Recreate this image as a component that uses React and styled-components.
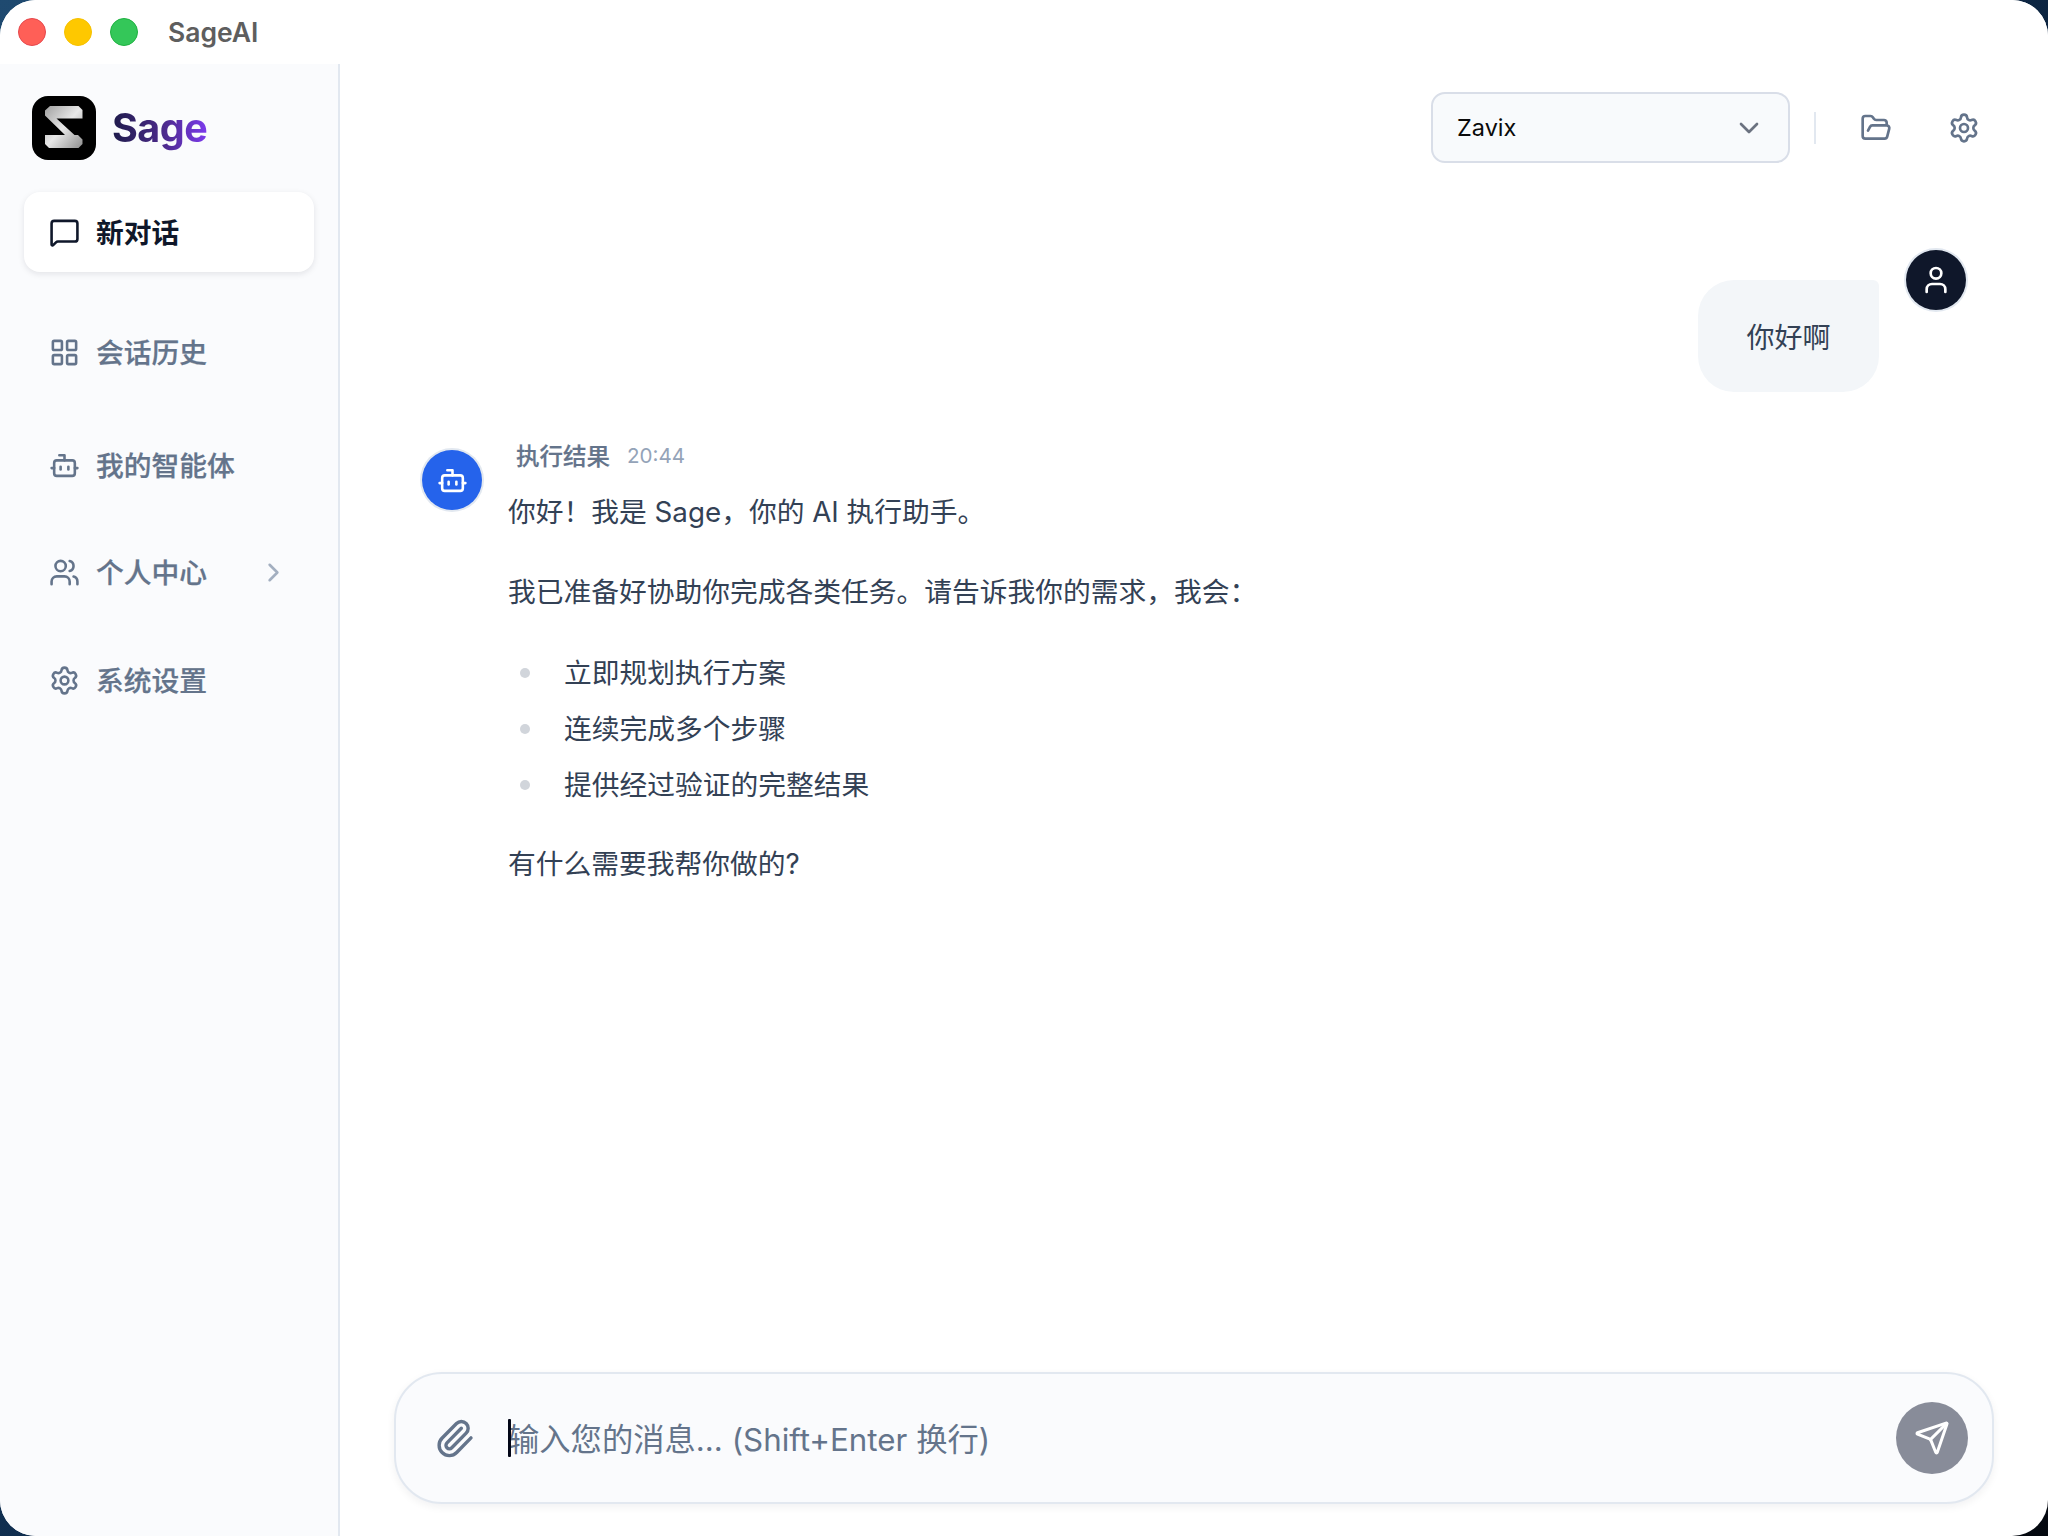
import React from 'react'
import styled, { createGlobalStyle } from 'styled-components'
import {
  MessageSquare,
  LayoutGrid,
  Bot,
  Users,
  ChevronRight,
  ChevronDown,
  Settings,
  FolderOpen,
  User,
  Paperclip,
  Send,
} from 'lucide-react'

const GlobalStyle = createGlobalStyle`
  html, body {
    margin: 0;
    padding: 0;
    height: 100%;
    background: linear-gradient(135deg, #1f4a70 0%, #0e2a4a 50%, #04080f 100%);
  }
  * {
    box-sizing: border-box;
  }
  #root {
    height: 1536px;
  }
`

const Window = styled.div`
  width: 2048px;
  height: 1536px;
  background: #fff;
  border-radius: 36px;
  overflow: hidden;
  display: flex;
  flex-direction: column;
  font-family: Inter, "Noto Sans CJK SC", "Noto Sans", sans-serif;
  color: #334155;
`

const TitleBar = styled.div`
  height: 64px;
  flex-shrink: 0;
  display: flex;
  align-items: center;
  padding-left: 18px;
  background: #fff;
`

const TrafficLight = styled.span`
  width: 28px;
  height: 28px;
  border-radius: 50%;
  margin-right: 18px;
  background: ${(p) => p.$color};
  border: 1px solid ${(p) => p.$edge};
`

const AppTitle = styled.div`
  margin-left: 12px;
  font-size: 26.5px;
  font-weight: 600;
  color: #5e5e5e;
`

const Body = styled.div`
  flex: 1;
  display: flex;
  min-height: 0;
`

const Sidebar = styled.aside`
  width: 340px;
  flex-shrink: 0;
  background: #fafbfd;
  border-right: 2px solid #e2e8f0;
  padding: 32px 24px 0;
`

const Brand = styled.div`
  display: flex;
  align-items: center;
  gap: 16px;
  padding-left: 8px;
  height: 64px;
  margin-bottom: 32px;
`

const LogoBox = styled.svg`
  width: 64px;
  height: 64px;
  display: block;
`

const BrandName = styled.span`
  font-size: 39.5px;
  font-weight: 700;
  letter-spacing: -0.5px;
  background: linear-gradient(90deg, #1e1b4b 0%, #4c2a8c 55%, #7c3aed 100%);
  -webkit-background-clip: text;
  background-clip: text;
  color: transparent;
`

const NavItem = styled.div`
  width: 290px;
  height: 80px;
  margin-top: ${(p) => p.$top || 0}px;
  padding: 0 25px;
  display: flex;
  align-items: center;
  gap: 16px;
  border-radius: 16px;
  font-size: 27.75px;
  font-weight: ${(p) => (p.$active ? 700 : 500)};
  -webkit-text-stroke: ${(p) => (p.$active ? 0 : '0.25px')};
  color: ${(p) => (p.$active ? '#0f172a' : '#64748b')};
  background: ${(p) => (p.$active ? '#fff' : 'transparent')};
  box-shadow: ${(p) => (p.$active ? '0 2px 6px rgba(15, 23, 42, 0.1)' : 'none')};
`

const NavLabel = styled.span`
  flex: 1;
  margin-bottom: 3px;
`

const Main = styled.main`
  flex: 1;
  min-width: 0;
  display: flex;
  flex-direction: column;
`

const Header = styled.header`
  display: flex;
  align-items: center;
  height: 71px;
  margin-top: 28px;
  padding-right: 68px;
  justify-content: flex-end;
`

const AgentSelect = styled.div`
  width: 359px;
  height: 71px;
  padding: 0 23px 0 24px;
  display: flex;
  align-items: center;
  justify-content: space-between;
  background: #f8fafc;
  border: 2px solid #d9dee8;
  border-radius: 14px;
  font-size: 23.5px;
  color: #0a0a0a;
`

const Divider = styled.div`
  width: 2px;
  height: 32px;
  background: #e2e8f0;
  margin: 0 44px 0 24px;
`

const HeaderIcons = styled.div`
  display: flex;
  align-items: center;
  gap: 56px;
  color: #64748b;
`

const Messages = styled.div`
  flex: 1;
  min-height: 0;
  padding: 0 0 0 82px;
`

const UserRow = styled.div`
  display: flex;
  justify-content: flex-end;
  padding-right: 82px;
  margin-top: 87px;
`

const UserBubble = styled.div`
  width: 181px;
  height: 112px;
  margin-top: 30px;
  display: flex;
  align-items: center;
  justify-content: center;
  background: #f3f6f9;
  border-radius: 36px 6px 36px 36px;
  font-size: 28px;
`

const Avatar = styled.div`
  width: 60px;
  height: 60px;
  border-radius: 50%;
  flex-shrink: 0;
  display: flex;
  align-items: center;
  justify-content: center;
  color: #fff;
  background: ${(p) => p.$bg};
  box-shadow: 0 0 0 2px #e2e8f0;
`

const UserAvatar = styled(Avatar)`
  margin-left: 27px;
`

const BotRow = styled.div`
  display: flex;
  margin-top: 51px;
`

const BotAvatar = styled(Avatar)`
  margin-top: 7px;
`

const BotContent = styled.div`
  margin-left: 26px;
  margin-top: -6px;
`

const MetaLine = styled.div`
  display: flex;
  align-items: center;
  gap: 17px;
  height: 36px;
  padding-left: 8px;
`

const MetaName = styled.span`
  font-size: 23.5px;
  font-weight: 500;
  -webkit-text-stroke: 0.2px;
  color: #64748b;
`

const MetaTime = styled.span`
  font-size: 20.6px;
  color: #94a3b8;
`

const Paragraph = styled.p`
  margin: ${(p) => p.$top}px 0 0;
  font-size: 27.75px;
  line-height: 44px;
  color: #334155;
`

const BulletList = styled.ul`
  list-style: none;
  margin: 37px 0 0;
  padding: 0;
`

const BulletItem = styled.li`
  position: relative;
  height: 44px;
  margin-bottom: 12px;
  padding-left: 56px;
  font-size: 27.75px;
  line-height: 44px;

  &::before {
    content: '';
    position: absolute;
    left: 12px;
    top: 17px;
    width: 10px;
    height: 10px;
    border-radius: 50%;
    background: #d1d5db;
  }
`

const Composer = styled.div`
  height: 132px;
  margin: 0 54px 32px 54px;
  padding: 0 24px 0 38px;
  display: flex;
  align-items: center;
  background: #fafbfd;
  border: 2px solid #e2e8f0;
  border-radius: 48px;
  box-shadow: 0 3px 8px rgba(15, 23, 42, 0.06);
`

const AttachIcon = styled.div`
  display: flex;
  color: #64748b;
  margin-right: 33px;
`

const InputText = styled.div`
  position: relative;
  flex: 1;
  font-size: 31.3px;
  color: #64748b;
  margin-bottom: 2px;

  &::before {
    content: '';
    position: absolute;
    left: 0;
    top: 50%;
    margin-top: -18px;
    width: 3px;
    height: 38px;
    border-radius: 1px;
    background: #020617;
  }
`

const SendButton = styled.button`
  width: 72px;
  height: 72px;
  padding: 0;
  border: none;
  border-radius: 50%;
  display: flex;
  align-items: center;
  justify-content: center;
  background: #888c99;
  color: #fff;
`

function Logo() {
  return (
    <LogoBox viewBox="0 0 64 64">
      <defs>
        <linearGradient id="logoFill" x1="0" y1="0" x2="1" y2="1">
          <stop offset="0" stopColor="#a0a0a0" />
          <stop offset="0.5" stopColor="#e8e8e8" />
          <stop offset="1" stopColor="#8e8e8e" />
        </linearGradient>
      </defs>
      <rect width="64" height="64" rx="16" fill="#000" />
      <path
        d="M18 10h28.500l4 4v8.500H24.500L42.500 39h3.500l4.500 4.500V48l-4 4H17l-4-4v-9h20L13 19.500v-5z"
        fill="url(#logoFill)"
      />
    </LogoBox>
  )
}

const navItems = [
  { label: '会话历史', icon: LayoutGrid, top: 40 },
  { label: '我的智能体', icon: Bot, top: 33 },
  { label: '个人中心', icon: Users, top: 27, arrow: true },
  { label: '系统设置', icon: Settings, top: 28 },
]

export default function App() {
  return (
    <>
      <GlobalStyle />
      <Window>
        <TitleBar>
          <TrafficLight $color="#ff5f57" $edge="#e5484d" />
          <TrafficLight $color="#fec800" $edge="#f5c000" />
          <TrafficLight $color="#34c759" $edge="#1fb141" />
          <AppTitle>SageAI</AppTitle>
        </TitleBar>
        <Body>
          <Sidebar>
            <Brand>
              <Logo />
              <BrandName>Sage</BrandName>
            </Brand>
            <NavItem $active>
              <MessageSquare size={31} strokeWidth={2} />
              <NavLabel>新对话</NavLabel>
            </NavItem>
            {navItems.map((item) => (
              <NavItem key={item.label} $top={item.top}>
                <item.icon size={31} strokeWidth={2} />
                <NavLabel>{item.label}</NavLabel>
                {item.arrow && <ChevronRight size={31} color="#a3afc0" />}
              </NavItem>
            ))}
          </Sidebar>
          <Main>
            <Header>
              <AgentSelect>
                Zavix
                <ChevronDown size={32} color="#6b7280" />
              </AgentSelect>
              <Divider />
              <HeaderIcons>
                <FolderOpen size={32} />
                <Settings size={32} />
              </HeaderIcons>
            </Header>
            <Messages>
              <UserRow>
                <UserBubble>你好啊</UserBubble>
                <UserAvatar $bg="#0f172a">
                  <User size={32} />
                </UserAvatar>
              </UserRow>
              <BotRow>
                <BotAvatar $bg="#2563eb">
                  <Bot size={31} />
                </BotAvatar>
                <BotContent>
                  <MetaLine>
                    <MetaName>执行结果</MetaName>
                    <MetaTime>20:44</MetaTime>
                  </MetaLine>
                  <Paragraph $top={17}>你好！我是 Sage，你的 AI 执行助手。</Paragraph>
                  <Paragraph $top={36}>我已准备好协助你完成各类任务。请告诉我你的需求，我会：</Paragraph>
                  <BulletList>
                    <BulletItem>立即规划执行方案</BulletItem>
                    <BulletItem>连续完成多个步骤</BulletItem>
                    <BulletItem>提供经过验证的完整结果</BulletItem>
                  </BulletList>
                  <Paragraph $top={35}>有什么需要我帮你做的?</Paragraph>
                </BotContent>
              </BotRow>
            </Messages>
            <Composer>
              <AttachIcon>
                <Paperclip size={41} />
              </AttachIcon>
              <InputText>输入您的消息... (Shift+Enter 换行)</InputText>
              <SendButton>
                <Send size={36} />
              </SendButton>
            </Composer>
          </Main>
        </Body>
      </Window>
    </>
  )
}
